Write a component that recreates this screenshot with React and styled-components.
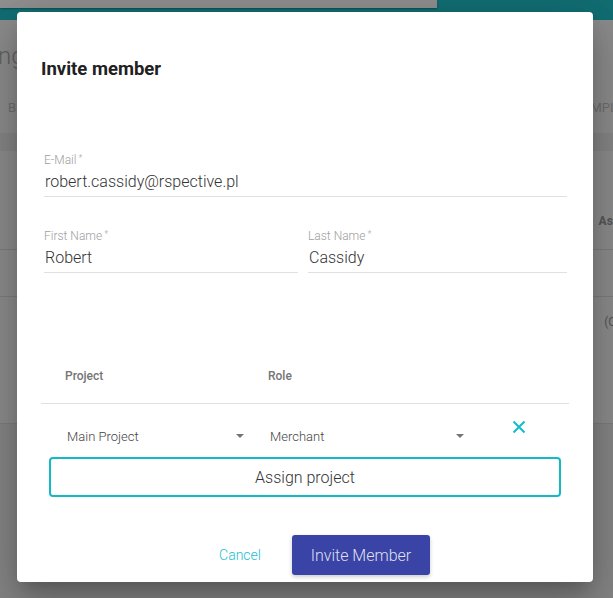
import React from "react";
import styled, { createGlobalStyle } from "styled-components";

const GlobalStyle = createGlobalStyle`
  html, body {
    margin: 0;
    padding: 0;
    height: 100%;
    overflow: hidden;
    font-family: Roboto, "Liberation Sans", Arial, sans-serif;
  }
`;

const Page = styled.div`
  width: 613px;
  height: 598px;
  background: #858585;
  position: relative;
  overflow: hidden;
`;

const TopBar = styled.div`
  height: 20px;
  background: #116e73;
`;

const SearchStrip = styled.div`
  width: 437px;
  height: 8px;
  background: #8f8f8f;
  box-shadow: 0 1px 2px rgba(0, 0, 0, 0.3);
`;

const Panel = styled.div`
  background: #8c8c8c;
  height: 404px;
  display: flex;
  flex-direction: column;
`;

const PageTitle = styled.div`
  font-size: 24px;
  font-weight: 300;
  color: #626262;
  margin: 22px 0 0 -2px;
  line-height: 28px;
`;

const Tabs = styled.div`
  display: flex;
  justify-content: space-between;
  margin-top: 30px;
  font-size: 13px;
  line-height: 15px;
  color: #6e6e6e;
  padding-left: 8px;
  margin-right: -4px;
`;

const Band = styled.div`
  height: 18px;
  margin-top: 18px;
  background: #858585;
`;

const TableRow = styled.div`
  height: ${(p) => p.h}px;
  border-bottom: 1px solid #7d7d7d;
  display: flex;
  justify-content: flex-end;
  align-items: ${(p) => (p.top ? "flex-start" : "flex-end")};
  padding: ${(p) => (p.top ? "18px 0 0" : "0 0 21px")};
  box-sizing: border-box;
  font-size: 12px;
  line-height: 14px;
  color: #555;
  font-weight: ${(p) => (p.bold ? 700 : 400)};
  margin-right: -6px;
`;

const Modal = styled.div`
  position: absolute;
  left: 17px;
  top: 12px;
  width: 576px;
  height: 570px;
  box-sizing: border-box;
  background: #fff;
  border-radius: 4px;
  box-shadow: 0 11px 15px -7px rgba(0, 0, 0, 0.2),
    0 24px 38px 3px rgba(0, 0, 0, 0.14), 0 9px 46px 8px rgba(0, 0, 0, 0.12);
  padding: 45px 24px 0;
  display: flex;
  flex-direction: column;
`;

const Title = styled.h2`
  margin: 0;
  font-size: 18.5px;
  line-height: 24px;
  font-weight: 700;
  color: #212121;
`;

const FieldRow = styled.div`
  display: flex;
  gap: 10px;
  margin: ${(p) => p.mt}px 2px 0 3px;
`;

const Field = styled.div`
  flex: ${(p) => (p.basis ? `0 0 ${p.basis}px` : "1")};
  display: flex;
  flex-direction: column;
  border-bottom: 1px solid #e0e0e0;
  padding-bottom: 4px;
`;

const Label = styled.label`
  font-size: 12px;
  line-height: 14px;
  color: #9e9e9e;
  font-weight: 300;

  sup {
    font-size: 9px;
    vertical-align: top;
    margin-left: 2px;
    line-height: 10px;
  }
`;

const Value = styled.div`
  margin-top: 5px;
  font-size: 16px;
  line-height: 20px;
  color: #333;
  font-weight: 300;
  padding-left: 1px;
`;

const Grid = styled.div`
  display: grid;
  grid-template-columns: 24px 203px 218px 1fr;
`;

const HeadRow = styled(Grid)`
  margin-top: 96px;
  border-bottom: 1px solid #e0e0e0;
  padding-bottom: 20px;
  font-size: 12px;
  line-height: 14px;
  font-weight: 500;
  color: #757575;
`;

const BodyRow = styled(Grid)`
  padding-top: 16px;
  align-items: start;
`;

const Select = styled.div`
  width: ${(p) => p.w}px;
  height: 32px;
  display: flex;
  align-items: center;
  justify-content: space-between;
  padding: 0 3px 0 2px;
  box-sizing: border-box;
  font-size: 13px;
  font-weight: 300;
  color: #444;
`;

const Caret = styled.span`
  width: 0;
  height: 0;
  border-left: 4px solid transparent;
  border-right: 4px solid transparent;
  border-top: 4px solid #757575;
`;

const RemoveButton = styled.button`
  border: 0;
  background: none;
  padding: 0;
  margin: 0 0 0 26px;
  width: 14px;
  height: 14px;
  color: #12bccb;
  display: flex;
  cursor: pointer;
`;

const AssignButton = styled.button`
  margin: 5px 8px 0;
  height: 40px;
  border: 2px solid #14b9c8;
  border-radius: 4px;
  background: #fff;
  font-family: inherit;
  font-size: 16px;
  font-weight: 300;
  color: #333;
  cursor: pointer;
`;

const Footer = styled.div`
  margin-top: 38px;
  display: flex;
  justify-content: center;
  align-items: center;
  gap: 15px;
  padding-left: 23px;
`;

const TextButton = styled.button`
  border: 0;
  background: none;
  padding: 0 16px;
  height: 40px;
  font-family: inherit;
  font-size: 14px;
  font-weight: 300;
  color: #1cc0cf;
  cursor: pointer;
`;

const PrimaryButton = styled.button`
  border: 0;
  width: 138px;
  height: 40px;
  border-radius: 3px;
  background: #3a44a6;
  color: rgba(255, 255, 255, 0.85);
  font-family: inherit;
  font-size: 16px;
  font-weight: 300;
  box-shadow: 0 2px 4px rgba(0, 0, 0, 0.2);
  cursor: pointer;
`;

function CloseIcon() {
  return (
    <svg width="14" height="14" viewBox="0 0 14 14">
      <path d="M1.5 1.5 L12.5 12.5 M12.5 1.5 L1.5 12.5" stroke="currentColor" strokeWidth="2" fill="none" />
    </svg>
  );
}

export default function App() {
  return (
    <>
      <GlobalStyle />
      <Page>
        <TopBar>
          <SearchStrip />
        </TopBar>
        <Panel>
          <PageTitle>ng</PageTitle>
          <Tabs>
            <span>B</span>
            <span>EXAMPL</span>
          </Tabs>
          <Band />
          <TableRow h={99} bold>
            <span>Ass</span>
          </TableRow>
          <TableRow h={47} />
          <TableRow h={127} top>
            <span>(Cl</span>
          </TableRow>
        </Panel>

        <Modal>
          <Title>Invite member</Title>

          <FieldRow mt={72}>
            <Field>
              <Label>
                E-Mail<sup>*</sup>
              </Label>
              <Value>robert.cassidy@rspective.pl</Value>
            </Field>
          </FieldRow>

          <FieldRow mt={32}>
            <Field basis={254}>
              <Label>
                First Name<sup>*</sup>
              </Label>
              <Value>Robert</Value>
            </Field>
            <Field>
              <Label>
                Last Name<sup>*</sup>
              </Label>
              <Value>Cassidy</Value>
            </Field>
          </FieldRow>

          <HeadRow>
            <span />
            <span>Project</span>
            <span>Role</span>
          </HeadRow>
          <BodyRow>
            <span />
            <Select w={182}>
              Main Project
              <Caret />
            </Select>
            <Select w={199}>
              Merchant
              <Caret />
            </Select>
            <RemoveButton aria-label="Remove">
              <CloseIcon />
            </RemoveButton>
          </BodyRow>

          <AssignButton>Assign project</AssignButton>

          <Footer>
            <TextButton>Cancel</TextButton>
            <PrimaryButton>Invite Member</PrimaryButton>
          </Footer>
        </Modal>
      </Page>
    </>
  );
}
